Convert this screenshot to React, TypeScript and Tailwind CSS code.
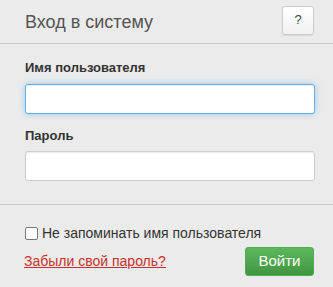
export default function App() {
  return (
    <div className="w-[333px] h-[287px] bg-[#ebebeb] font-['Liberation_Sans',Arial,sans-serif] text-[#333] flex flex-col overflow-hidden">
      <div className="h-[44px] px-[25px] flex items-center justify-between border-b border-[#c9c9c9] shrink-0">
        <h1 className="text-[18px] text-[#555] leading-none">Вход в систему</h1>
        <button className="w-[32px] h-[29px] mr-[-6px] mt-[-3px] rounded-[3px] border border-[#ccc] bg-gradient-to-b from-white to-[#f1f1f1] text-[13px] text-[#444] shadow-[0_1px_1px_rgba(0,0,0,0.08)]">
          ?
        </button>
      </div>

      <div className="px-[25px] pt-[16px] h-[161px] shrink-0 border-b border-[#c9c9c9]">
        <label className="block text-[13px] font-bold leading-[16px]">Имя пользователя</label>
        <input
          className="mt-[8px] block w-[290px] h-[30px] rounded-[3px] bg-white border border-[#66afe9] shadow-[inset_0_1px_1px_rgba(0,0,0,0.075),0_0_6px_rgba(102,175,233,0.6)] outline-none px-2 text-[14px]"
        />
        <label className="block mt-[14px] text-[13px] font-bold leading-[16px]">Пароль</label>
        <input
          type="password"
          className="mt-[7px] block w-[290px] h-[30px] rounded-[3px] bg-white border border-[#ccc] shadow-[inset_0_1px_1px_rgba(0,0,0,0.075)] outline-none px-2 text-[14px]"
        />
      </div>

      <div className="px-[25px] pt-[20px] pr-[19px]">
        <label className="flex items-center gap-[4px] text-[14px] leading-[16px]">
          <span className="w-[13px] h-[13px] rounded-[2px] border border-[#767676] bg-white shrink-0" />
          <span>Не запоминать имя пользователя</span>
        </label>
        <div className="mt-[6px] flex items-center justify-between">
          <a href="#" className="text-[14px] text-[#c9302c] underline ml-[-1px]">Забыли свой пароль?</a>
          <button className="w-[69px] h-[29px] rounded-[3px] border border-[#4cae4c] bg-gradient-to-b from-[#5cb85c] to-[#419641] text-white text-[15px]">
            Войти
          </button>
        </div>
      </div>
    </div>
  );
}
